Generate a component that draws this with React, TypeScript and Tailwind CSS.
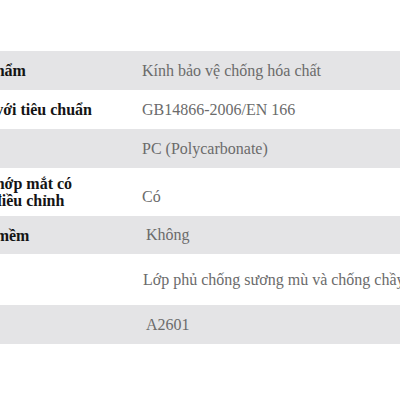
import React from "react";

const rows = [
  { label: "Tên sản phẩm", value: "Kính bảo vệ chống hóa chất", h: "h-[39px]", bg: "bg-[#e4e4e6]", vc: "pl-[12px]" },
  { label: "Tuân thủ với tiêu chuẩn", value: "GB14866-2006/EN 166", h: "h-[39px]", bg: "bg-white", vc: "pl-[12px]" },
  { label: "Chất liệu", value: "PC (Polycarbonate)", h: "h-[39px]", bg: "bg-[#e4e4e6]", vc: "pl-[12px]" },
  { label: "Tấm lót khớp mắt có thể được điều chỉnh", value: "Có", h: "h-[48px]", bg: "bg-white", vc: "pl-[12px] pt-[10px]" },
  { label: "Đệm mũi mềm", value: "Không", h: "h-[38px]", bg: "bg-[#e4e4e6]", vc: "pl-[16px]" },
  { label: "Lớp phủ", value: "Lớp phủ chống sương mù và chống chầy xước", h: "h-[51px]", bg: "bg-white", vc: "pl-[13px]" },
  { label: "Model", value: "A2601", h: "h-[39px]", bg: "bg-[#e4e4e6]", vc: "pl-[16px]" },
];

export default function App() {
  return (
    <div className="w-[400px] h-[400px] overflow-hidden bg-white" style={{ fontFamily: '"Liberation Serif", serif' }}>
      <div className="pt-[51px] ml-[-81px] w-[800px]">
        {rows.map((r, i) => (
          <div key={i} className={`flex items-center ${r.h} ${r.bg}`}>
            <div className="w-[211px] shrink-0 pl-[10px] pr-[34px] text-[16px] leading-[17px] font-bold text-[#141414]">
              {r.label}
            </div>
            <div className={`${r.vc} text-[16px] leading-[20px] text-[#6b6b6b] whitespace-nowrap`}>{r.value}</div>
          </div>
        ))}
      </div>
    </div>
  );
}
